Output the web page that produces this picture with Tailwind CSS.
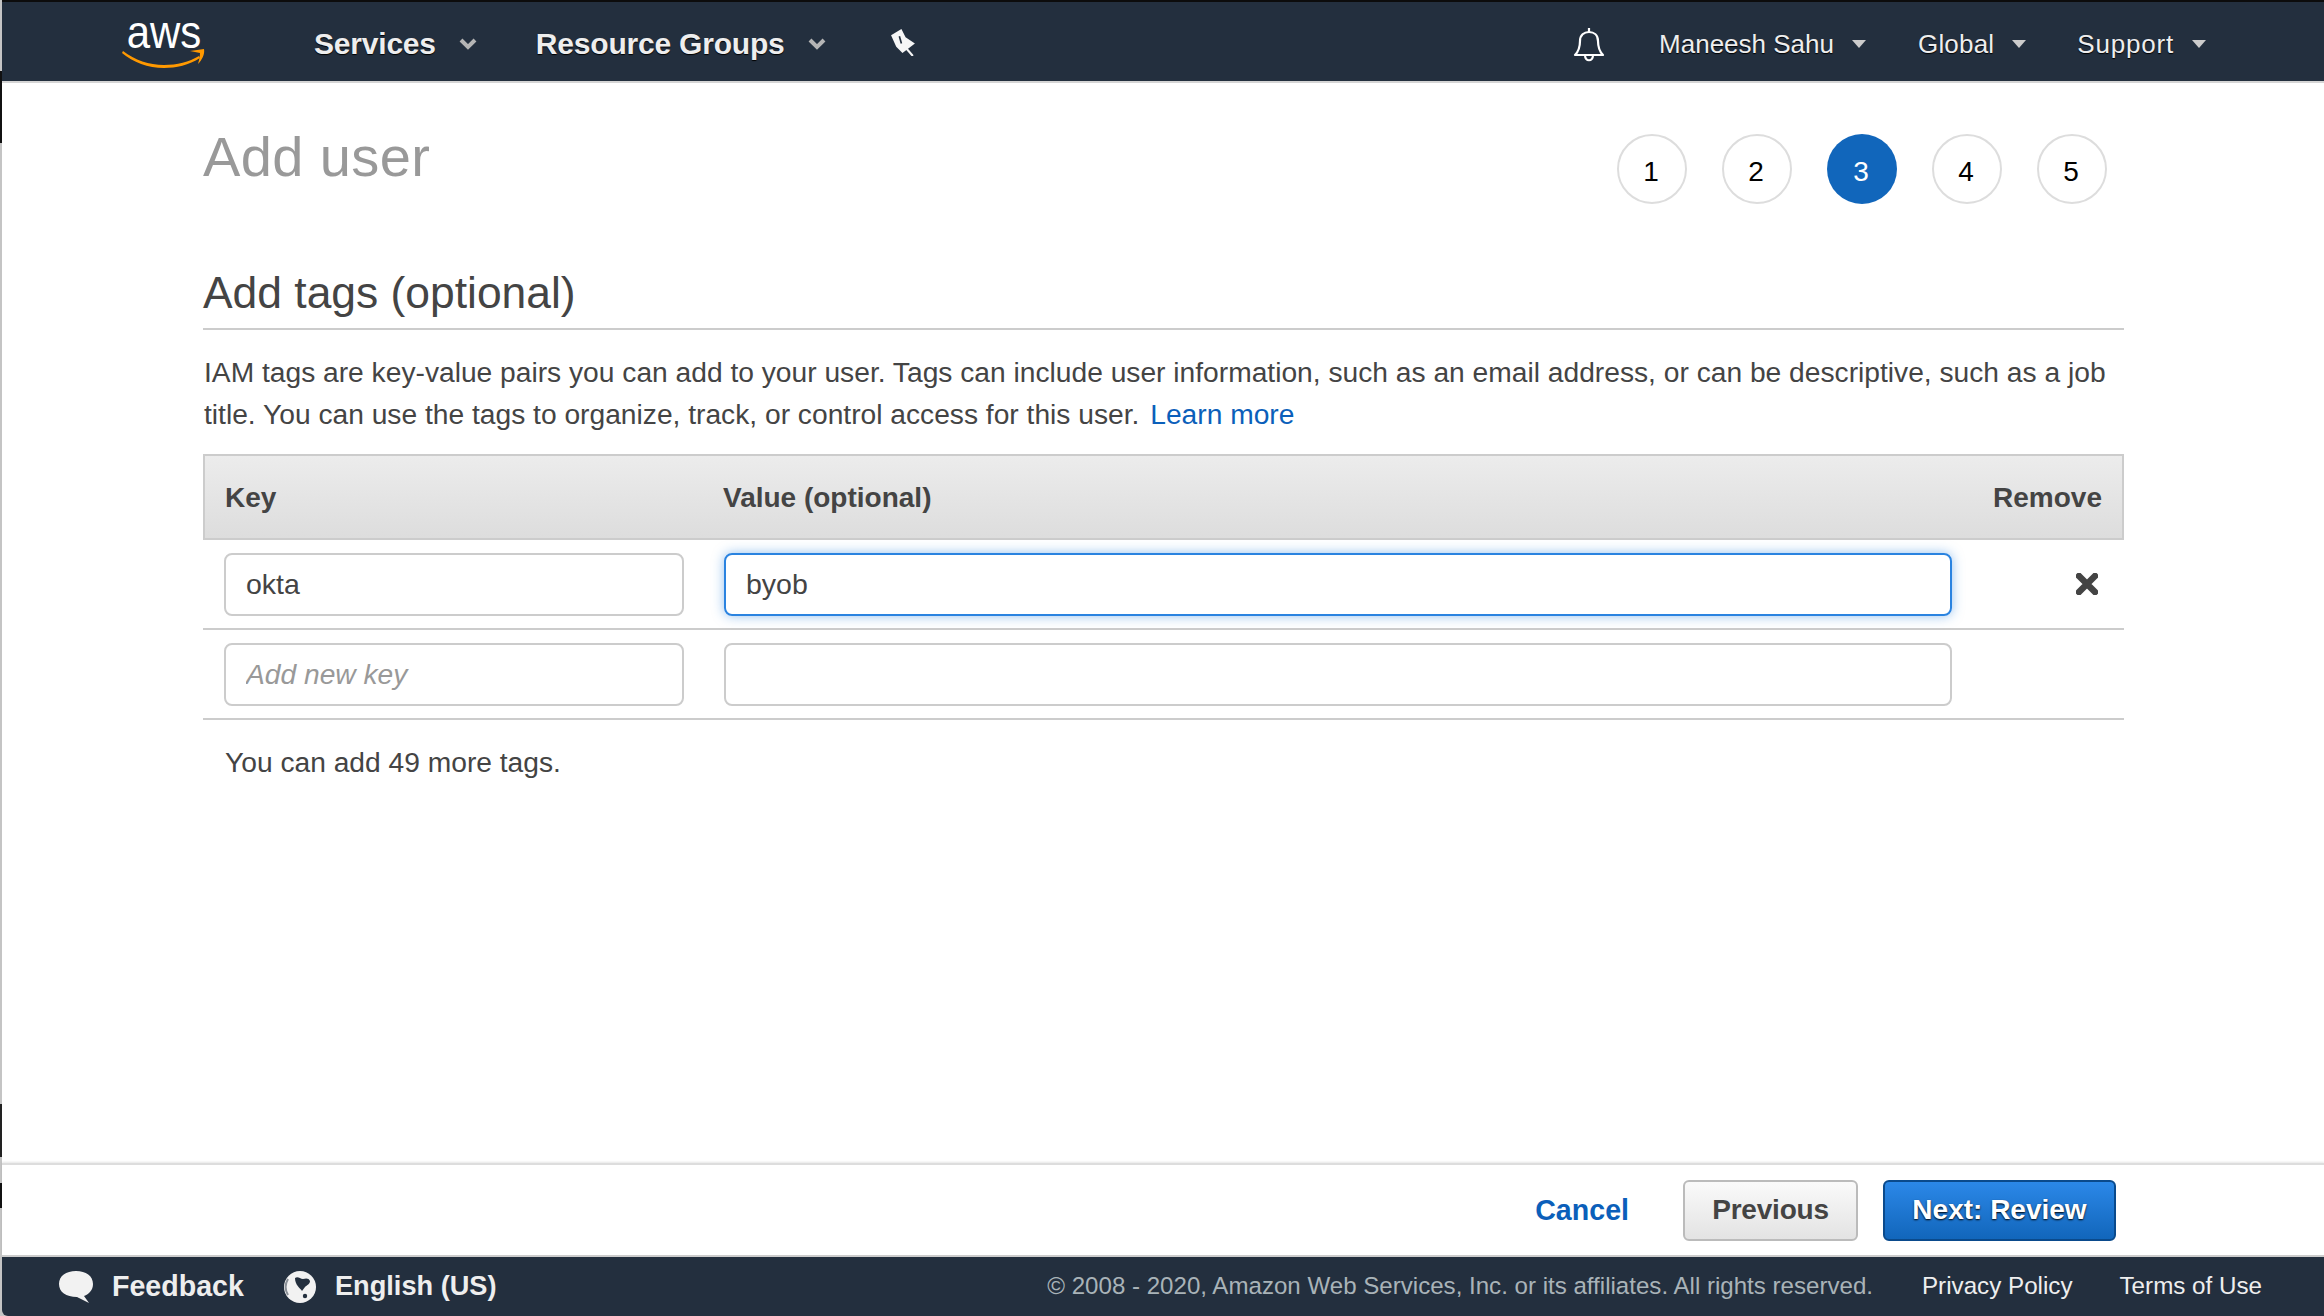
<!DOCTYPE html>
<html lang="en">

<head>
    <meta charset="UTF-8">
    <title>Add user</title>
    <script src="https://cdn.jsdelivr.net/npm/@tailwindcss/browser@4"></script>
</head>

<body class="bg-white font-['Liberation_Sans',Arial,sans-serif] text-[#444]">
    <div class="relative flex flex-col h-[1316px] w-[2324px] overflow-hidden pl-[2px] bg-[#c4c4c4]">

        <!-- top nav -->
        <header class="flex items-center h-[83px] bg-[#232f3e] border-t-2 border-t-[#0c0c0c] border-b-2 border-b-[#d5d5d5] pl-[120px] pr-[118px] shrink-0">
            <div class="flex flex-col items-center w-[84px] shrink-0">
                <span class="block text-[42px] leading-[34px] text-white scale-y-[1.12]">aws</span>
                <svg class="w-[84px] h-[20px] -mt-[1px]" viewBox="0 0 84 20">
                    <path d="M1 3c12 9 26 14 41 14 13 0 25-3 35-9l1 2C67 17 54 20 42 20 26 20 11 14 0 5z" fill="#f90" />
                    <path d="M68 3l14-2c1 5-2 11-6 15 1-4 2-7 2-11z" fill="#f90" />
                </svg>
            </div>
            <nav class="flex items-center ml-[108px] pt-[4px] text-[#eee] font-bold text-[30px] [text-shadow:0_1px_1px_#000] leading-none">
                <span class="tracking-[-0.2px]">Services</span>
                <svg class="w-[18px] h-[12px] ml-[23px]" viewBox="0 0 18 12"><path d="M2 2l7 7 7-7" stroke="#b5b5b5" stroke-width="4" fill="none" /></svg>
                <span class="ml-[59px] tracking-[-0.2px]">Resource Groups</span>
                <svg class="w-[18px] h-[12px] ml-[23px]" viewBox="0 0 18 12"><path d="M2 2l7 7 7-7" stroke="#b5b5b5" stroke-width="4" fill="none" /></svg>
                <svg class="w-[25px] h-[28px] ml-[65px] -mt-[3px]" viewBox="0 0 24 27">
                    <path d="M0 7L10 1l4 8 9 6-12 9-6-6z" fill="#f6f6f6" />
                    <path d="M8 8l2 7" stroke="#232f3e" stroke-width="1.6" />
                    <path d="M15 20l6 7" stroke="#f6f6f6" stroke-width="2" />
                </svg>
            </nav>
            <div class="flex items-center ml-auto pt-[4px] text-[#eee] text-[26px] [text-shadow:0_1px_1px_#000] leading-none">
                <svg class="w-[34px] h-[36px]" viewBox="0 0 34 36" fill="none" stroke="#fff" stroke-width="2.2" stroke-linejoin="round">
                    <path d="M3 29c4-4 5-8 5-14 0-6 4-9 9-9s9 3 9 9c0 6 1 10 5 14z" />
                    <path d="M17 6V2M13 29c0 7 8 7 8 0" />
                </svg>
                <span class="ml-[53px]">Maneesh Sahu</span>
                <span class="ml-[18px] w-0 h-0 border-x-[7px] border-x-transparent border-t-[8px] border-t-[#ccc]"></span>
                <span class="ml-[52px] tracking-[0.2px]">Global</span>
                <span class="ml-[18px] w-0 h-0 border-x-[7px] border-x-transparent border-t-[8px] border-t-[#ccc]"></span>
                <span class="ml-[51px] tracking-[0.8px]">Support</span>
                <span class="ml-[18px] w-0 h-0 border-x-[7px] border-x-transparent border-t-[8px] border-t-[#ccc]"></span>
            </div>
        </header>

        <!-- wizard content -->
        <main class="flex-1 bg-white pl-[201px] pr-[200px]">
            <div class="flex justify-between items-start">
                <h1 class="mt-[40px] text-[56px] leading-[68px] text-[#999] tracking-[0.4px]">Add user</h1>
                <ol class="flex gap-[35px] mt-[51px] mr-[17px] text-[28px] text-black">
                    <li class="flex items-center justify-center w-[70px] h-[70px] pt-[6px] pr-[2px] rounded-full border-2 border-[#ddd]">1</li>
                    <li class="flex items-center justify-center w-[70px] h-[70px] pt-[6px] pr-[2px] rounded-full border-2 border-[#ddd]">2</li>
                    <li class="flex items-center justify-center w-[70px] h-[70px] pt-[6px] pr-[2px] rounded-full bg-[#1166bb] text-white">3</li>
                    <li class="flex items-center justify-center w-[70px] h-[70px] pt-[6px] pr-[2px] rounded-full border-2 border-[#ddd]">4</li>
                    <li class="flex items-center justify-center w-[70px] h-[70px] pt-[6px] pr-[2px] rounded-full border-2 border-[#ddd]">5</li>
                </ol>
            </div>

            <h2 class="mt-[62px] pb-[8px] text-[44.4px] leading-[54px] border-b-2 border-[#ccc]">Add tags (optional)</h2>
            <p class="mt-[21px] pl-[1px] text-[28.2px] leading-[42px]">IAM tags are key-value pairs you can add to your user. Tags can include user information, such as an email address, or can be descriptive, such as a job title. You can use the tags to organize, track, or control access for this user. <a href="#" class="ml-[3px] text-[#0b5fba]">Learn more</a></p>

            <!-- tags table -->
            <div class="mt-[19px]">
                <div class="flex items-center h-[86px] px-[20px] pt-[2px] border-2 border-[#ccc] bg-linear-to-b from-[#ececec] to-[#dddddd] text-[28px] font-bold">
                    <span class="w-[498px]">Key</span>
                    <span>Value (optional)</span>
                    <span class="ml-auto">Remove</span>
                </div>
                <div class="flex items-center h-[90px] pl-[21px] border-b-2 border-[#ccc]">
                    <input value="okta" class="w-[460px] h-[63px] px-[20px] rounded-[8px] border-2 border-[#ccc] text-[28.5px] text-[#444] outline-none">
                    <input value="byob" class="ml-[40px] w-[1228px] h-[63px] px-[20px] rounded-[8px] border-2 border-[#2a83e0] shadow-[0_0_12px_rgba(42,131,224,0.5)] text-[28.5px] text-[#444] outline-none">
                    <svg class="ml-[124px] w-[22px] h-[22px]" viewBox="0 0 22 22"><path d="M3 3l16 16M19 3L3 19" stroke="#444" stroke-width="6.5" stroke-linecap="round" /></svg>
                </div>
                <div class="flex items-center h-[90px] pl-[21px] border-b-2 border-[#ccc]">
                    <input placeholder="Add new key" class="w-[460px] h-[63px] px-[20px] rounded-[8px] border-2 border-[#ccc] text-[28.2px] italic placeholder:text-[#999] outline-none">
                    <input class="ml-[40px] w-[1228px] h-[63px] px-[20px] rounded-[8px] border-2 border-[#ccc] text-[28px] outline-none">
                </div>
                <p class="mt-[25px] pl-[22px] text-[28.2px] leading-[34px]">You can add 49 more tags.</p>
            </div>
        </main>

        <!-- wizard actions -->
        <div class="flex items-center justify-end h-[92px] shrink-0 bg-white border-t-2 border-[#ddd] shadow-[0_-1px_2px_rgba(0,0,0,0.1)] pr-[208px] text-[28px] font-bold">
            <a href="#" class="text-[#0b5fba] text-[28.6px]">Cancel</a>
            <button class="ml-[54px] w-[175px] h-[61px] rounded-[6px] border-2 border-[#bbb] bg-linear-to-b from-[#fafafa] to-[#e3e3e3] text-[#444] tracking-[-0.2px]">Previous</button>
            <button class="ml-[25px] w-[233px] h-[61px] rounded-[6px] border-2 border-[#0a4a8c] bg-linear-to-b from-[#2b88e8] to-[#1166bb] text-white [text-shadow:0_1px_2px_#000]">Next: Review</button>
        </div>

        <!-- console footer -->
        <footer class="flex items-center h-[61px] shrink-0 bg-[#232f3e] border-t-2 border-[#ccc] rounded-bl-[6px] pl-[56px] pr-[62px] text-[#eee] text-[24.2px]">
            <svg class="w-[36px] h-[34px]" viewBox="0 0 36 34"><path d="M18 1c10 0 17 5 17 13 0 6-4 10-9 12l5 7-12-6C8 27 1 22 1 14 1 6 8 1 18 1z" fill="#f2f2f2" /></svg>
            <span class="ml-[18px] text-[28.6px] font-bold">Feedback</span>
            <svg class="ml-[39px] w-[34px] h-[34px]" viewBox="0 0 34 34">
                <circle cx="17" cy="17" r="16" fill="#f2f2f2" />
                <path d="M12 8c3-2 5 1 8 1 3-1 6-1 7 2 0 3-3 4-5 6-1 1-2 3-3 4-2-3-7-6-7-13z" fill="#232f3e" />
                <circle cx="22" cy="26" r="2.2" fill="#232f3e" />
                <path d="M5 9c-3 5-3 11 0 16" stroke="#8a9097" stroke-width="2" fill="none" />
            </svg>
            <span class="ml-[18px] text-[27.2px] font-bold">English (US)</span>
            <span class="ml-auto text-[#a9b3b8] text-[24.1px]">© 2008 - 2020, Amazon Web Services, Inc. or its affiliates. All rights reserved.</span>
            <span class="ml-[49px]">Privacy Policy</span>
            <span class="ml-[47px]">Terms of Use</span>
        </footer>

        <!-- window edge -->
        <div class="absolute left-0 top-[71px] w-[2px] h-[72px] bg-[#111]"></div>
        <div class="absolute left-0 top-[1104px] w-[2px] h-[53px] bg-[#222]"></div>
        <div class="absolute left-0 top-[1183px] w-[2px] h-[25px] bg-[#111]"></div>
    </div>
</body>

</html>
